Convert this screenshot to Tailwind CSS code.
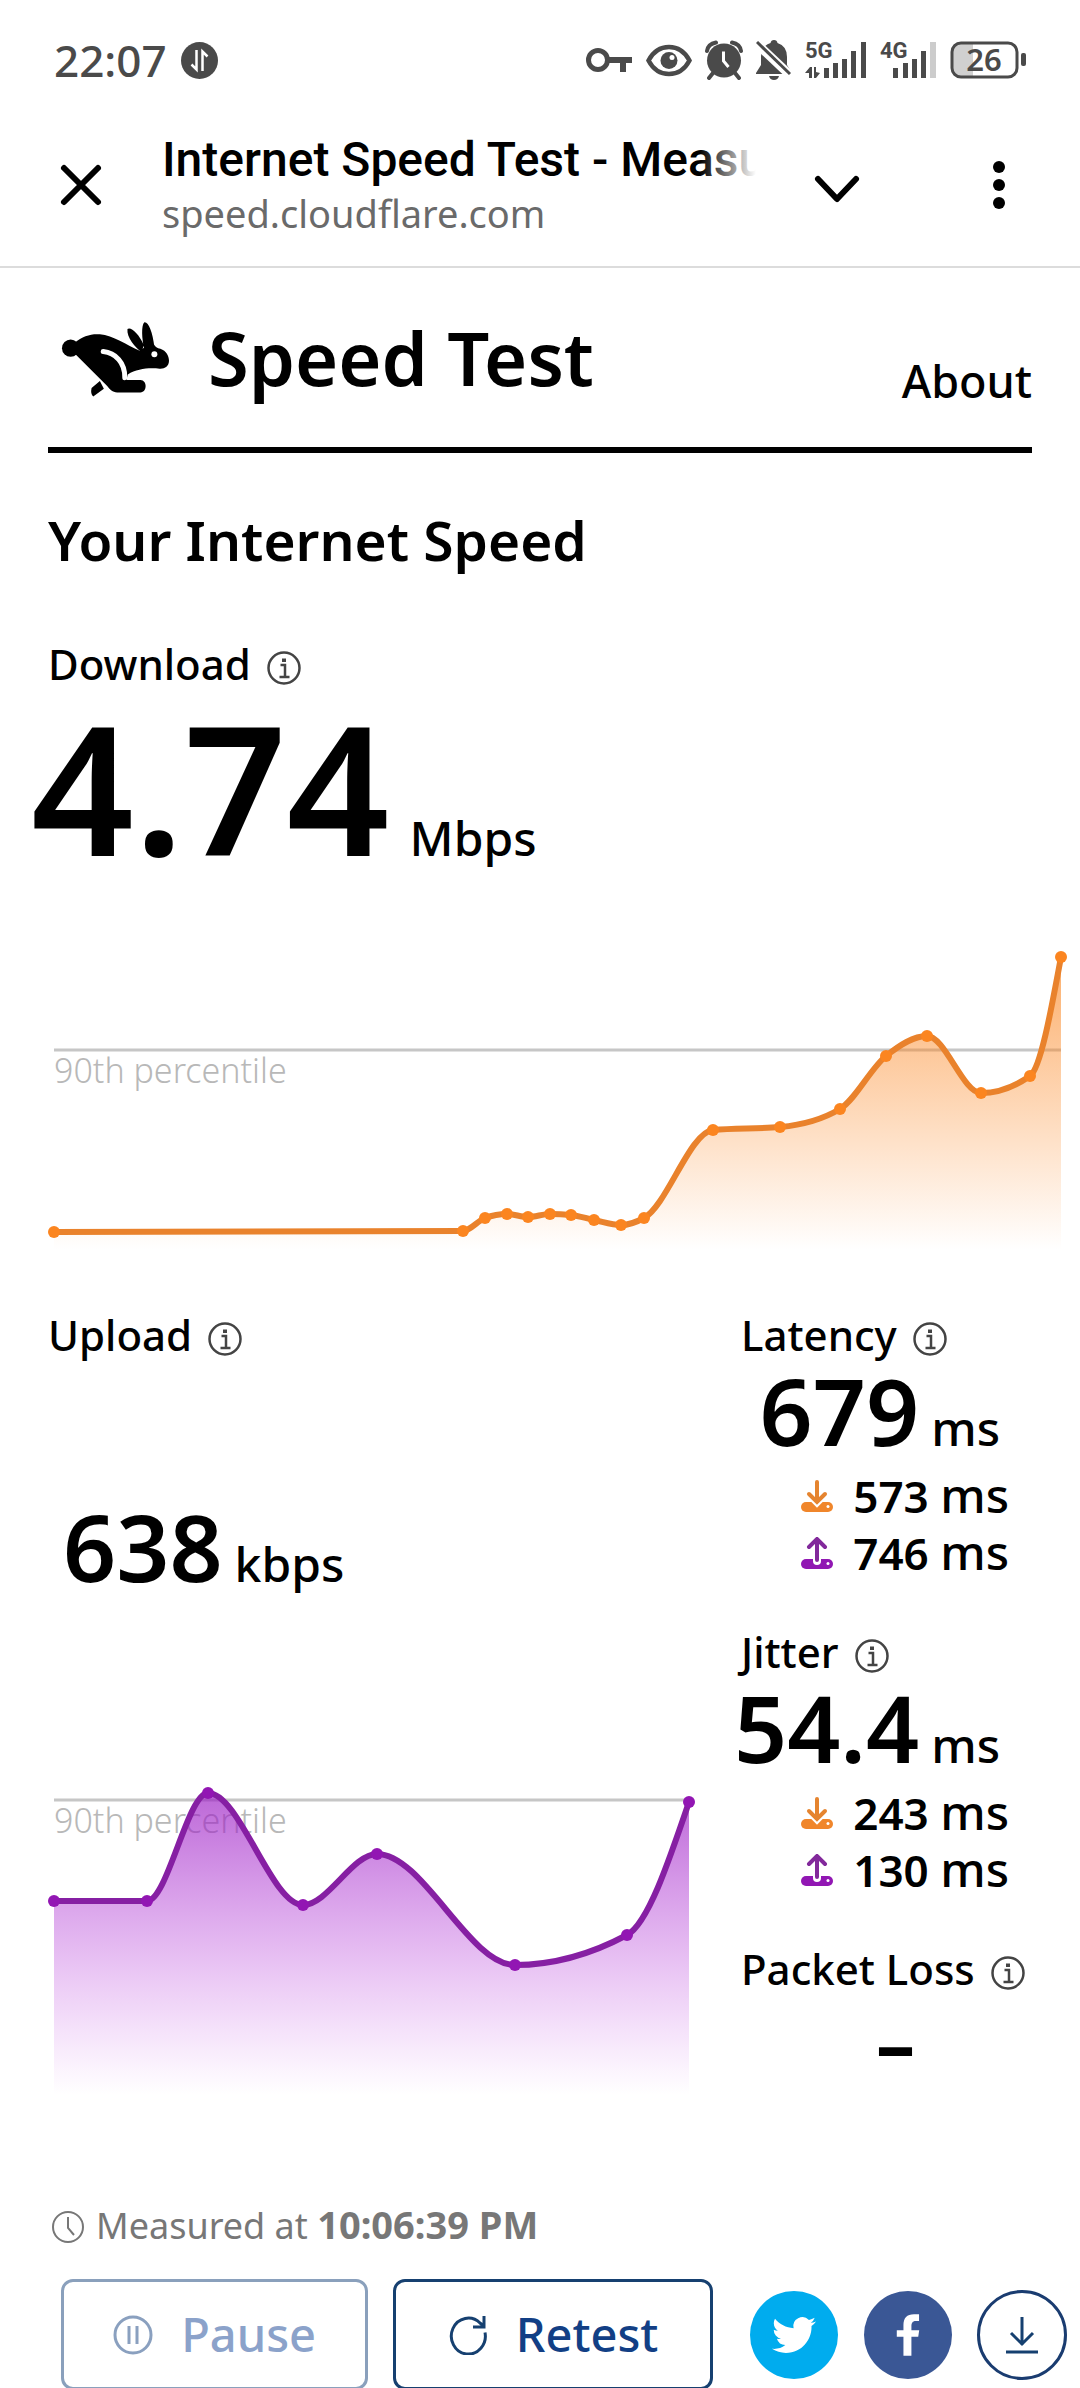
<!DOCTYPE html>
<html lang="en">
<head>
<meta charset="utf-8">
<meta name="viewport" content="width=device-width, initial-scale=1">
<title>Internet Speed Test - Measure Network Performance</title>
<script src="https://cdn.jsdelivr.net/npm/@tailwindcss/browser@4"></script>
</head>
<body class="bg-white font-['Noto_Sans',sans-serif] text-black">

<!-- Shared icons -->
<svg class="hidden" aria-hidden="true">
  <symbol id="info" viewBox="0 0 34 34">
    <circle cx="17" cy="17" r="15.500" fill="none" stroke="#444" stroke-width="2.500"/>
    <rect x="15" y="7.500" width="4" height="3.500" fill="#444"/>
    <path d="M13.500 14H18v11.500M12.500 26h10" fill="none" stroke="#444" stroke-width="2.500"/>
  </symbol>
  <symbol id="down" viewBox="0 0 32 32">
    <rect x="0" y="22" width="32" height="10" rx="5" fill="#f0862b"/>
    <path d="M16 2v20M8 14l8 8 8-8" fill="none" stroke="#fff" stroke-width="8"/>
    <path d="M16 2v19M8 14l8 8 8-8" fill="none" stroke="#e5842f" stroke-width="4" stroke-linecap="round"/>
    <circle cx="27" cy="26.500" r="1.500" fill="#fff"/>
  </symbol>
  <symbol id="up" viewBox="0 0 32 32">
    <rect x="0" y="22" width="32" height="10" rx="5" fill="#9117b3"/>
    <path d="M16 4v20" fill="none" stroke="#fff" stroke-width="8" stroke-linecap="round"/>
    <path d="M16 23V3M8 10l8-8 8 8" fill="none" stroke="#82299b" stroke-width="4" stroke-linecap="round"/>
    <circle cx="27" cy="26.500" r="1.500" fill="#fff"/>
  </symbol>
</svg>

<!-- Phone status bar -->
<div class="flex h-[120px] items-center justify-between px-[54px] text-[#4a4a4a]">
  <div class="flex items-center gap-[14px]">
    <span class="text-[44px] font-medium leading-[60px]">22:07</span>
    <svg class="size-[37px]" viewBox="0 0 37 37"><circle cx="18.500" cy="18.500" r="18.500" fill="#4a4a4a"/><path d="M15.500 8v19.500l-5-5M21.500 29V9.500l5 5" fill="none" stroke="#fff" stroke-width="2.500"/></svg>
  </div>
  <div class="flex items-center gap-[13px]">
    <svg class="h-10 w-[48px]" viewBox="0 0 48 40" fill="none" stroke="#4a4a4a"><circle cx="13" cy="20" r="9.500" stroke-width="5"/><path d="M23 20h24M38 20v12" stroke-width="6"/></svg>
    <svg class="h-10 w-[46px]" viewBox="0 0 46 40"><path d="M2.500 20.500C12 2.500 34 2.500 43.500 20.500 34 38.500 12 38.500 2.500 20.500Z" fill="none" stroke="#4a4a4a" stroke-width="4.500"/><circle cx="23" cy="20.500" r="8.500" fill="#4a4a4a"/><circle cx="26" cy="17.500" r="2.500" fill="#fff"/></svg>
    <svg class="h-10 w-[38px]" viewBox="0 0 38 40"><circle cx="19" cy="20.500" r="17" fill="#4a4a4a"/><path d="M2 11Q3 4 11 2.500M36 11Q35 4 27 2.500M8 33l-4 5M30 33l4 5" fill="none" stroke="#4a4a4a" stroke-width="4" stroke-linecap="round"/><path d="M18.500 11.500V21l5 6" fill="none" stroke="#fff" stroke-width="3"/></svg>
    <svg class="h-11 w-[36px]" viewBox="0 0 36 44"><path d="M18 2q3 0 3.500 3Q31 8 31 19v8l5 8v1H0v-1l5-8v-8Q5 8 14.500 5 15 2 18 2ZM13 38h10q-1 4-5 4t-5-4Z" fill="#4a4a4a"/><path d="M-1 4 35 38" stroke="#fff" stroke-width="9"/><path d="M1 4 34 36" stroke="#4a4a4a" stroke-width="3"/></svg>
    <svg class="h-12 w-[62px] font-['Roboto',sans-serif]" viewBox="0 -4 62 48" fill="#4a4a4a"><text x="0" y="18" font-size="22" font-weight="700">5G</text><path d="M0 33l5-6h2v11H4v-5Zm15 0-4 5H9V27h2v5ZM19 28h5v10h-5ZM28 23h5v15h-5ZM37 19h5v19h-5ZM46 11h5v27h-5ZM56 2h5v36h-5Z"/></svg>
    <svg class="h-12 w-[57px] font-['Roboto',sans-serif]" viewBox="0 -4 57 48" fill="#4a4a4a"><text x="0" y="18" font-size="22" font-weight="700">4G</text><path d="M13 28h5v10h-5ZM23 23h5v15h-5ZM32 19h5v19h-5ZM41 11h5v27h-5Z"/><path d="M50 2h6v36h-6Z" fill="#ccc"/></svg>
    <svg class="h-12 w-[76px]" viewBox="0 -4 76 48"><path d="M10 3h13v34H10Q2 37 2 29V11Q2 3 10 3Z" fill="#d0d0d0"/><rect x="2" y="3" width="65" height="34" rx="9" fill="none" stroke="#4a4a4a" stroke-width="3"/><rect x="71" y="13" width="5" height="13" rx="2" fill="#4a4a4a"/><text x="34" y="31" text-anchor="middle" font-size="31" font-weight="600" fill="#4a4a4a">26</text></svg>
  </div>
</div>

<!-- In-app browser bar -->
<div class="flex items-center border-b-2 border-[#dcdcdc] pt-3 pb-7">
  <button class="ml-[57px] shrink-0" aria-label="Close">
    <svg class="size-12" viewBox="0 0 48 48"><path d="M7 7l34 34M41 7L7 41" stroke="#000" stroke-width="6" stroke-linecap="round"/></svg>
  </button>
  <div class="ml-[57px] min-w-0 flex-1">
    <div class="relative overflow-hidden whitespace-nowrap font-['Roboto',sans-serif] text-[48px] font-medium leading-[56px]">Internet Speed Test - Measure
      <span class="absolute inset-y-0 right-0 w-14 bg-linear-to-r from-white/0 to-white"></span>
    </div>
    <div class="text-[38px] leading-[50px] text-[#6a6a6a]">speed.cloudflare.com</div>
  </div>
  <button class="ml-[57px] shrink-0" aria-label="More about this page">
    <svg class="size-12" viewBox="0 0 48 48"><path d="M5 18l19 20 19-20" fill="none" stroke="#000" stroke-width="6" stroke-linecap="round" stroke-linejoin="round"/></svg>
  </button>
  <button class="mr-[57px] ml-[114px] shrink-0" aria-label="Menu">
    <svg class="size-12" viewBox="0 0 48 48"><circle cx="24" cy="6" r="6"/><circle cx="24" cy="24" r="6"/><circle cx="24" cy="42" r="6"/></svg>
  </button>
</div>

<main class="px-12">
  <header class="flex items-end justify-between border-b-6 border-black pt-[39px] pb-[38px]">
    <div class="flex items-center gap-[38px] pl-[13px]">
      <svg class="h-[77px] w-[109px]" viewBox="33 24 328 230" role="img" aria-label="Running rabbit">
        <circle cx="62" cy="108" r="26"/>
        <path d="M74 92C98 71 123 64 150 66 190 70 230 98 270 116L287 104 312 96C317 104 322 107 332 110 350 116 358 132 358 146 358 162 345 171 330 170 298 166 262 170 234 187L230 204H272C293 204 293 241 272 241H202C188 241 180 232 172 222L78 128Z"/>
        <path d="M233 50C243 42 268 65 282 98L276 120C256 106 230 75 233 50ZM284 30C296 28 309 60 314 104L284 112C276 80 274 38 284 30ZM150 207 162 230 130 253Q121 246 125 228Z"/>
        <path d="M160 118C196 122 226 150 225 197" fill="none" stroke="#fff" stroke-width="15" stroke-linecap="round"/>
        <circle cx="314" cy="126" r="9" fill="#fff"/>
      </svg>
      <h1 class="text-[74px] font-semibold leading-[102px]">Speed Test</h1>
    </div>
    <a href="#about" class="text-[45px] font-medium leading-[56px]">About</a>
  </header>

  <h2 class="mt-[51px] text-[55px] font-semibold leading-[72px]">Your Internet Speed</h2>

  <section>
    <div class="mt-[60px] flex items-center gap-4">
      <h3 class="text-[42px] font-medium leading-[56px]">Download</h3>
      <button class="mt-2" aria-label="About download"><svg class="size-[34px]"><use href="#info"/></svg></button>
    </div>
    <p class="mt-[5px] -ml-[17px] flex items-baseline gap-5">
      <span class="text-[180px] font-semibold leading-[180px]">4.74</span>
      <span class="text-[48px] font-medium leading-[56px]">Mbps</span>
    </p>
    <div class="-mx-12 mt-[63px]">
      <svg id="download-chart" class="block w-full" viewBox="0 940 1080 320" role="img" aria-label="Download speed over time">
        <defs><linearGradient id="og" gradientUnits="userSpaceOnUse" x1="0" y1="957" x2="0" y2="1250"><stop offset="0" stop-color="#fb8520" stop-opacity=".66"/><stop offset="1" stop-color="#fb8520" stop-opacity="0"/></linearGradient></defs>
        <path d="M54 1050H1061" stroke="#c6c6c6" stroke-width="3"/>
        <text x="54" y="1083" font-size="34" font-weight="300" fill="#b8b8b8">90th percentile</text>
      </svg>
    </div>
  </section>

  <div class="mt-[47px] grid grid-cols-[minmax(0,693fr)_minmax(0,291fr)]">
    <section>
      <div class="flex items-center gap-4">
        <h3 class="text-[42px] font-medium leading-[56px]">Upload</h3>
        <button class="mt-2" aria-label="About upload"><svg class="size-[34px]"><use href="#info"/></svg></button>
      </div>
      <p class="mt-[137px] ml-[15px] flex items-baseline gap-3">
        <span class="text-[93px] font-semibold leading-[92px]">638</span>
        <span class="text-[48px] font-medium leading-[56px]">kbps</span>
      </p>
      <div class="mt-[188px] -ml-12">
        <svg id="upload-chart" class="block w-full" viewBox="0 1780 741 330" role="img" aria-label="Upload speed over time">
          <defs><linearGradient id="pg" gradientUnits="userSpaceOnUse" x1="0" y1="1793" x2="0" y2="2095"><stop offset="0" stop-color="#9c1fc4" stop-opacity=".68"/><stop offset="1" stop-color="#c23fe6" stop-opacity="0"/></linearGradient></defs>
          <path d="M54 1800H689" stroke="#c6c6c6" stroke-width="3"/>
          <text x="54" y="1833" font-size="34" font-weight="300" fill="#b8b8b8">90th percentile</text>
        </svg>
      </div>
    </section>

    <div class="flex flex-col gap-[43px]">
      <section>
        <div class="flex items-center gap-4">
          <h3 class="text-[42px] font-medium leading-[56px]">Latency</h3>
          <button class="mt-2" aria-label="About latency"><svg class="size-[34px]"><use href="#info"/></svg></button>
        </div>
        <p class="mt-px flex h-[92px] items-baseline justify-end gap-3 pr-8">
          <span class="text-[93px] font-semibold leading-[92px]">679</span>
          <span class="text-[48px] font-medium leading-[56px]">ms</span>
        </p>
        <ul class="mt-[11px] pr-[23px] text-[44px] leading-[57px]">
          <li class="flex h-[57px] items-center justify-end gap-5"><svg class="size-8"><use href="#down"/></svg><span class="font-semibold">573 <span class="text-[48px] font-medium">ms</span></span></li>
          <li class="flex h-[57px] items-center justify-end gap-5"><svg class="size-8"><use href="#up"/></svg><span class="font-semibold">746 <span class="text-[48px] font-medium">ms</span></span></li>
        </ul>
      </section>
      <section>
        <div class="flex items-center gap-4">
          <h3 class="text-[42px] font-medium leading-[56px]">Jitter</h3>
          <button class="mt-2" aria-label="About jitter"><svg class="size-[34px]"><use href="#info"/></svg></button>
        </div>
        <p class="mt-px flex h-[92px] items-baseline justify-end gap-3 pr-8">
          <span class="text-[93px] font-semibold leading-[92px]">54.4</span>
          <span class="text-[48px] font-medium leading-[56px]">ms</span>
        </p>
        <ul class="mt-[11px] pr-[23px] text-[44px] leading-[57px]">
          <li class="flex h-[57px] items-center justify-end gap-5"><svg class="size-8"><use href="#down"/></svg><span class="font-semibold">243 <span class="text-[48px] font-medium">ms</span></span></li>
          <li class="flex h-[57px] items-center justify-end gap-5"><svg class="size-8"><use href="#up"/></svg><span class="font-semibold">130 <span class="text-[48px] font-medium">ms</span></span></li>
        </ul>
      </section>
      <section>
        <div class="flex items-center gap-4 whitespace-nowrap">
          <h3 class="text-[42px] font-medium leading-[56px]">Packet Loss</h3>
          <button class="mt-2 shrink-0" aria-label="About packet loss"><svg class="size-[34px]"><use href="#info"/></svg></button>
        </div>
        <p class="pl-[18px] text-center text-[78px] font-bold leading-[92px]">–</p>
      </section>
    </div>
  </div>

  <p class="mt-[90px] flex items-center gap-3 pl-1 text-[36px] leading-[48px] text-[#777]">
    <svg class="mt-1 size-8" viewBox="0 0 32 32" fill="none" stroke="#777" stroke-width="2"><circle cx="16" cy="16" r="15"/><path d="M16 6v11l6 7"/></svg>
    <span>Measured at <time class="text-[38px] font-bold">10:06:39 PM</time></span>
  </p>

  <div class="mt-[29px] -mr-[35px] ml-[13px] flex items-center">
    <button disabled class="flex h-[111px] flex-[307_1_0%] items-center justify-center gap-7 rounded-xl border-3 border-[#8aa0bc] text-[47px] font-medium text-[#8ba2ca]">
      <svg class="size-10" viewBox="0 0 40 40" fill="none" stroke="#8aa0bf" stroke-width="3"><circle cx="20" cy="20" r="18"/><path d="M16 11v18M24 11v18"/></svg>
      Pause
    </button>
    <button class="ml-[25px] flex h-[111px] flex-[320_1_0%] items-center justify-center gap-7 rounded-xl border-3 border-[#164070] text-[47px] font-medium text-[#123f85]">
      <svg class="size-10" viewBox="0 0 40 40" fill="none" stroke="#164070" stroke-width="3"><path d="M37 17.500A17 18 0 1 1 32 8L36 11M36 1v11H25"/></svg>
      Retest
    </button>
    <a href="#twitter" aria-label="Share on Twitter" class="ml-[37px] flex size-[88px] shrink-0 items-center justify-center rounded-full bg-[#00acee]">
      <svg class="size-11" viewBox="0 0 24 24" fill="#fff"><path d="M23.953 4.57a10 10 0 01-2.825.775 4.958 4.958 0 002.163-2.723c-.951.555-2.005.959-3.127 1.184a4.92 4.92 0 00-8.384 4.482C7.69 8.095 4.067 6.13 1.64 3.162a4.822 4.822 0 00-.666 2.475c0 1.71.87 3.213 2.188 4.096a4.904 4.904 0 01-2.228-.616v.06a4.923 4.923 0 003.946 4.827 4.996 4.996 0 01-2.212.085 4.936 4.936 0 004.604 3.417 9.867 9.867 0 01-6.102 2.105c-.39 0-.779-.023-1.17-.067a13.995 13.995 0 007.557 2.209c9.053 0 13.998-7.496 13.998-13.985 0-.21 0-.42-.015-.63A9.935 9.935 0 0024 4.59z"/></svg>
    </a>
    <a href="#facebook" aria-label="Share on Facebook" class="ml-[26px] flex size-[88px] shrink-0 items-center justify-center rounded-full bg-[#3a5795]">
      <svg class="h-[42px] w-[26px]" viewBox="0 0 320 512" fill="#fff"><path d="M286 279l12-82h-96v-52c0-36 14-62 52-62h42V0h-62c-88 0-130 48-130 134v63H22v82h82v233h98V279z"/></svg>
    </a>
    <button aria-label="Download results" class="ml-[25px] flex size-[90px] shrink-0 items-center justify-center rounded-full border-3 border-[#1a3c70]">
      <svg class="size-10" viewBox="0 0 40 40" fill="none" stroke="#164070" stroke-width="3"><path d="M20 2v28M9 18l11 11 11-11M4 37h32"/></svg>
    </button>
  </div>
</main>

<script>
// Draws a monotone cubic line with its shaded area and point markers.
const NS = 'http://www.w3.org/2000/svg';
function drawSeries(id, pts, base, fill, line, dot) {
  const n = pts.length, svg = document.getElementById(id), h = [], s = [], m = [];
  for (let i = 0; i < n - 1; i++) {
    h[i] = pts[i + 1][0] - pts[i][0];
    s[i] = (pts[i + 1][1] - pts[i][1]) / h[i];
  }
  for (let i = 1; i < n - 1; i++) {
    const p = (s[i - 1] * h[i] + s[i] * h[i - 1]) / (h[i - 1] + h[i]);
    m[i] = (Math.sign(s[i - 1]) + Math.sign(s[i])) * Math.min(Math.abs(s[i - 1]), Math.abs(s[i]), Math.abs(p) / 2) || 0;
  }
  m[0] = (3 * s[0] - m[1]) / 2;
  m[n - 1] = (3 * s[n - 2] - m[n - 2]) / 2;
  let d = `M${pts[0]}`;
  for (let i = 0; i < n - 1; i++) {
    const [x, y] = pts[i], [X, Y] = pts[i + 1], k = h[i] / 3;
    d += `C${x + k},${y + k * m[i]} ${X - k},${Y - k * m[i + 1]} ${X},${Y}`;
  }
  const add = (tag, attrs) => {
    const e = document.createElementNS(NS, tag);
    for (const a in attrs) e.setAttribute(a, attrs[a]);
    svg.appendChild(e);
  };
  add('path', { d: `${d}V${base}H${pts[0][0]}Z`, fill });
  add('path', { d, fill: 'none', stroke: line, 'stroke-width': 6 });
  for (const [cx, cy] of pts) add('circle', { cx, cy, r: 6, fill: dot });
}
drawSeries('download-chart', [[54,1232],[463,1231],[485,1218],[507,1214],[528,1217],[550,1214],[571,1215],[594,1220],[621,1225],[644,1218],[713,1130],[780,1127],[840,1109],[886,1056],[927,1036],[981,1093],[1030,1076],[1061,957]], 1250, 'url(#og)', '#e9822c', '#fb8520');
drawSeries('upload-chart', [[54,1901],[147,1901],[208,1793],[303,1905],[377,1854],[515,1965],[627,1935],[689,1802]], 2095, 'url(#pg)', '#861fa3', '#9216b3');
</script>
</body>
</html>
